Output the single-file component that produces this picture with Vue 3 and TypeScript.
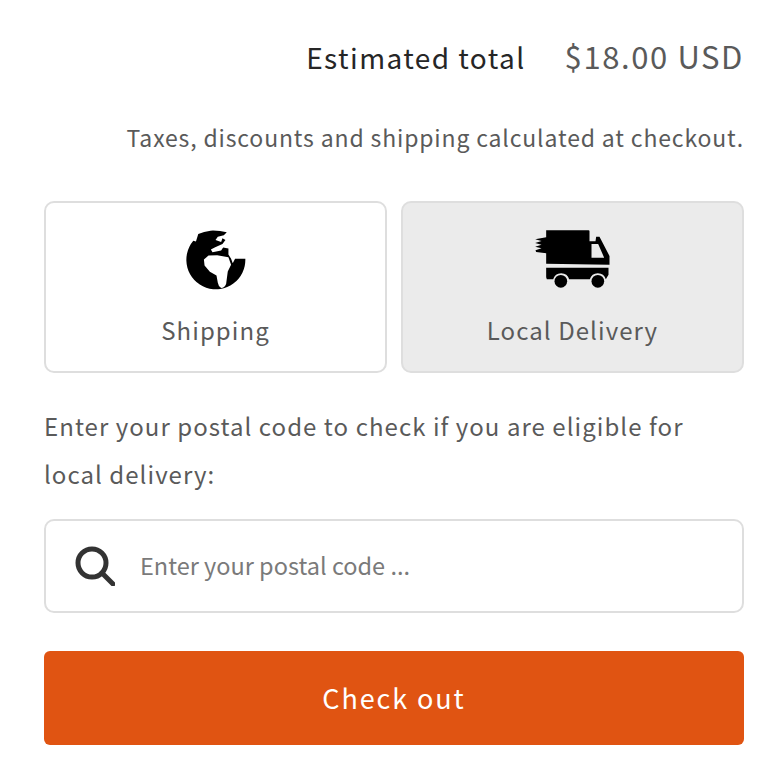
<script setup lang="ts">
const lines: string[] = ['Enter your postal code to check if you are eligible for', 'local delivery:']
</script>

<template>
  <main class="cart">
    <div class="totals">
      <h2 class="totals-label">Estimated total</h2>
      <p class="totals-value">$18.00 USD</p>
    </div>
    <p class="note">Taxes, discounts and shipping calculated at checkout.</p>
    <div class="tabs">
      <button class="tab" type="button">
        <svg class="globe" viewBox="78 42 181 179" aria-hidden="true">
          <path d="M115 53 Q132 45 152 43 Q178 42 201 48 L192 57 L174 61 L167 71 L184 77 L188 66 L197 71 L188 83 L166 93 L153 100 L158 108 L184 103 L190 94 L206 97 L206 115 L214 128 L219 141 L226 128 L257 128 A89 89 0 1 1 100 73.6 L108 76 Z M132 130 L146 118 L172 117 L206 123 L214 146 L204 166 L199 204 Q194 216 184 216 Q176 212 174 200 L170 178 L150 167 L134 148 Z" fill="#000" fill-rule="evenodd" />
        </svg>
        <span>Shipping</span>
      </button>
      <button class="tab tab-active" type="button">
        <svg class="truck" viewBox="45 44 224 174" aria-hidden="true">
          <path d="M78 45 H205 Q208 45 208 48 V78 H226 L228 64 H238 L268 122 V148 L78 145 V114 L48 110 L46 105 L64 99 L45 94 L64 88 L45 83 L64 77 L45 72 L78 66 Z M214 86 V127 H252 L234 86 Z" fill="#000" fill-rule="evenodd" />
          <path d="M78 157 L265 157 V178 L257 192 A25 25 0 0 0 209 192 H147 A25 25 0 0 0 99 192 H80 L78 186 Z" fill="#000" />
          <circle cx="122" cy="198" r="19" fill="#000" />
          <circle cx="233" cy="198" r="19" fill="#000" />
        </svg>
        <span>Local Delivery</span>
      </button>
    </div>
    <p class="prompt">
      <span v-for="line in lines" :key="line" class="prompt-line">{{ line }}</span>
    </p>
    <label class="field">
      <svg class="search" viewBox="0 0 40 40" aria-hidden="true">
        <circle cx="17" cy="17" r="14" fill="none" stroke="#333" stroke-width="5" />
        <path d="M27 27 L38 38" stroke="#333" stroke-width="5" stroke-linecap="round" />
      </svg>
      <input class="input" type="text" placeholder="Enter your postal code ..." />
    </label>
    <button class="checkout" type="button">Check out</button>
  </main>
</template>

<style scoped>
.cart {
  box-sizing: border-box;
  width: 778px;
  height: 782px;
  padding: 32px 34px 0 44px;
  font-family: "Noto Sans CJK SC", "Noto Sans", sans-serif;
  color: #5a5a5a;
  background: #fff;
}
.totals {
  display: flex;
  justify-content: flex-end;
  align-items: baseline;
  gap: 39px;
}
.totals-label {
  margin: 0;
  font-size: 28px;
  font-weight: 400;
  letter-spacing: 1.43px;
  line-height: 48px;
  color: #262626;
}
.totals-value {
  margin: 0;
  font-size: 31px;
  letter-spacing: 1.6px;
  line-height: 48px;
}
.note {
  margin: 36px 0 0;
  text-align: right;
  font-size: 23px;
  letter-spacing: 0.85px;
  line-height: 40px;
}
.tabs {
  display: grid;
  grid-template-columns: 343px 343px;
  gap: 14px;
  margin-top: 44px;
}
.tab {
  box-sizing: border-box;
  height: 172px;
  display: flex;
  flex-direction: column;
  align-items: center;
  padding: 27px 0 0;
  border: 2px solid #dedede;
  border-radius: 10px;
  background: #fff;
  color: #5a5a5a;
  font: inherit;
  font-size: 24px;
  letter-spacing: 1.07px;
}
.tab span {
  line-height: 40px;
}
.tab-active {
  background: #ebebeb;
}
.globe {
  width: 60px;
  height: 60px;
  margin-bottom: 20px;
}
.truck {
  width: 75px;
  height: 58px;
  margin-bottom: 22px;
}
.prompt {
  margin: 29px 0 0;
  font-size: 24px;
  letter-spacing: 1.05px;
  line-height: 48px;
}
.prompt-line {
  display: block;
}
.field {
  box-sizing: border-box;
  height: 94px;
  display: flex;
  align-items: center;
  gap: 25px;
  margin-top: 21px;
  padding-left: 29px;
  border: 2px solid #dedede;
  border-radius: 10px;
}
.search {
  width: 40px;
  height: 40px;
  flex: none;
}
.input {
  flex: 1;
  min-width: 0;
  border: 0;
  outline: 0;
  padding: 0 0 2px;
  background: transparent;
  font: inherit;
  font-size: 23.5px;
  color: #5a5a5a;
}
.input::placeholder {
  color: #7a7a7a;
  opacity: 1;
}
.checkout {
  display: block;
  width: 100%;
  height: 94px;
  margin-top: 38px;
  padding: 0 0 2px;
  border: 0;
  border-radius: 6px;
  background: #e05412;
  color: #fff;
  font: inherit;
  font-size: 27px;
  letter-spacing: 1.9px;
}
</style>
